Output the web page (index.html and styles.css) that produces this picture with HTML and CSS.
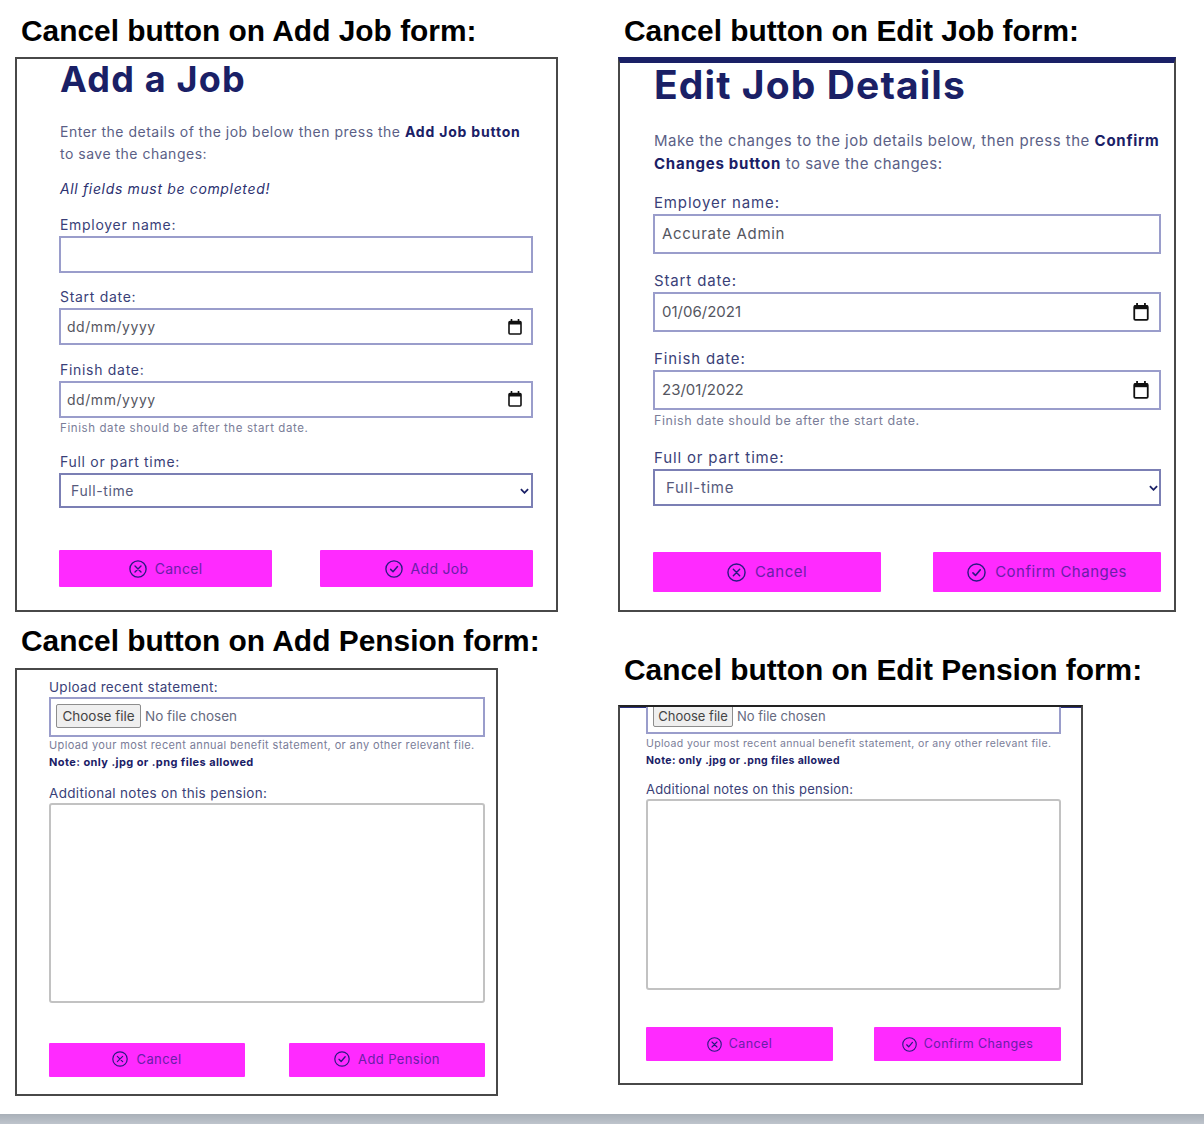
FILE: index.html
```html
<!DOCTYPE html>
<html lang="en">
<head>
<meta charset="utf-8">
<title>Cancel buttons on forms</title>
<link rel="stylesheet" href="styles.css">
</head>
<body>
<svg class="defs" width="0" height="0" aria-hidden="true">
  <symbol id="i-x" viewBox="0 0 24 24"><circle cx="12" cy="12" r="10.8" fill="none" stroke="currentColor" stroke-width="1.8"/><path d="M8 8l8 8M16 8l-8 8" fill="none" stroke="currentColor" stroke-width="1.8" stroke-linecap="round"/></symbol>
  <symbol id="i-c" viewBox="0 0 24 24"><circle cx="12" cy="12" r="10.8" fill="none" stroke="currentColor" stroke-width="1.8"/><path d="M7.5 12.5l3.200 3.200 6-7" fill="none" stroke="currentColor" stroke-width="2" stroke-linecap="round" stroke-linejoin="round"/></symbol>
  <symbol id="i-cal" viewBox="0 0 14 16"><path d="M3.500 0v2M10.500 0v2" stroke="#111" stroke-width="1.600" fill="none"/><rect x="1" y="2.500" width="12" height="12.500" rx="1" fill="none" stroke="#111" stroke-width="1.600"/><rect x="1" y="2" width="12" height="3.500" fill="#111"/></symbol>
  <symbol id="i-chev" viewBox="0 0 10 6"><path d="M1 1l4 4 4-4" fill="none" stroke="#1a2066" stroke-width="2"/></symbol>
</svg>
<main class="sheet">
  <section class="col">
    <h1 class="cap cap-a">Cancel button on Add Job form:</h1>
    <div class="panel add-job">
      <h2 class="title">Add a Job</h2>
      <p class="lead">Enter the details of the job below then press the <b>Add Job button</b> to save the changes:</p>
      <p class="lead req"><i>All fields must be completed!</i></p>
      <div class="field"><label class="lbl">Employer name:</label><div class="box"></div></div>
      <div class="field"><label class="lbl">Start date:</label><div class="box date"><span>dd/mm/yyyy</span><svg class="cal"><use href="#i-cal"/></svg></div></div>
      <div class="field"><label class="lbl">Finish date:</label><div class="box date"><span>dd/mm/yyyy</span><svg class="cal"><use href="#i-cal"/></svg></div><div class="hint">Finish date should be after the start date.</div></div>
      <div class="field"><label class="lbl">Full or part time:</label><div class="box sel"><span>Full-time</span><svg class="chev"><use href="#i-chev"/></svg></div></div>
      <div class="actions">
        <div class="btn"><svg class="ico"><use href="#i-x"/></svg><span>Cancel</span></div>
        <div class="btn"><svg class="ico"><use href="#i-c"/></svg><span>Add Job</span></div>
      </div>
    </div>
    <h1 class="cap cap-c">Cancel button on Add Pension form:</h1>
    <div class="panel add-pen">
      <div class="field"><label class="lbl">Upload recent statement:</label>
        <div class="box file"><span class="choose">Choose file</span><span class="none">No file chosen</span></div>
        <div class="hint">Upload your most recent annual benefit statement, or any other relevant file.</div>
        <div class="note">Note: only .jpg or .png files allowed</div>
      </div>
      <div class="field"><label class="lbl">Additional notes on this pension:</label><div class="area"></div></div>
      <div class="actions">
        <div class="btn"><svg class="ico"><use href="#i-x"/></svg><span>Cancel</span></div>
        <div class="btn"><svg class="ico"><use href="#i-c"/></svg><span>Add Pension</span></div>
      </div>
    </div>
  </section>
  <section class="col">
    <h1 class="cap cap-b">Cancel button on Edit Job form:</h1>
    <div class="panel edit-job">
      <h2 class="title">Edit Job Details</h2>
      <p class="lead">Make the changes to the job details below, then press the <b>Confirm Changes button</b> to save the changes:</p>
      <div class="field"><label class="lbl">Employer name:</label><div class="box"><span>Accurate Admin</span></div></div>
      <div class="field"><label class="lbl">Start date:</label><div class="box date"><span>01/06/2021</span><svg class="cal"><use href="#i-cal"/></svg></div></div>
      <div class="field"><label class="lbl">Finish date:</label><div class="box date"><span>23/01/2022</span><svg class="cal"><use href="#i-cal"/></svg></div><div class="hint">Finish date should be after the start date.</div></div>
      <div class="field"><label class="lbl">Full or part time:</label><div class="box sel"><span>Full-time</span><svg class="chev"><use href="#i-chev"/></svg></div></div>
      <div class="actions">
        <div class="btn"><svg class="ico"><use href="#i-x"/></svg><span>Cancel</span></div>
        <div class="btn"><svg class="ico"><use href="#i-c"/></svg><span>Confirm Changes</span></div>
      </div>
    </div>
    <h1 class="cap cap-d">Cancel button on Edit Pension form:</h1>
    <div class="panel edit-pen">
      <div class="field">
        <div class="box file"><span class="choose">Choose file</span><span class="none">No file chosen</span></div>
        <div class="hint">Upload your most recent annual benefit statement, or any other relevant file.</div>
        <div class="note">Note: only .jpg or .png files allowed</div>
      </div>
      <div class="field"><label class="lbl">Additional notes on this pension:</label><div class="area"></div></div>
      <div class="actions">
        <div class="btn"><svg class="ico"><use href="#i-x"/></svg><span>Cancel</span></div>
        <div class="btn"><svg class="ico"><use href="#i-c"/></svg><span>Confirm Changes</span></div>
      </div>
    </div>
  </section>
</main>
<div class="strip"></div>
</body>
</html>
```
FILE: styles.css
```css
* { box-sizing: border-box; }
html, body { margin: 0; padding: 0; background: #fff; }
body { font-family: Inter, "Liberation Sans", sans-serif; color: #1a2066; }
.defs { position: absolute; }
.sheet { display: grid; grid-template-columns: 603px 586px; padding-left: 15px; height: 1114px; overflow: hidden; }
.col { display: flex; flex-direction: column; align-items: flex-start; }
.cap { margin: 0 0 0 6px; font: 700 29.9px/34px "Liberation Sans", Arial, sans-serif; color: #000; white-space: nowrap; }
.cap-a, .cap-b { margin-top: 14px; margin-bottom: 9px; }
.cap-c { margin-top: 12px; margin-bottom: 10px; }
.cap-d { margin-top: 41px; margin-bottom: 18px; }
.panel { border: 2px solid #484848; background: #fff; display: flex; flex-direction: column; }
.title { margin: 0; font-weight: 700; color: #1a2066; white-space: nowrap; }
.lead { margin: 0; color: #5b5f86; font-weight: 400; }
.lead b { color: #1a2066; font-weight: 700; }
.req { color: #2c3170; }
.lbl { display: block; color: #3a3f78; white-space: nowrap; }
.box { border: 2px solid #9a9dcb; background: #fff; display: flex; align-items: center; color: #55565f; white-space: nowrap; }
.date { justify-content: space-between; }
.sel { justify-content: space-between; color: #565a7c; border-color: #7b7fb4; }
.cal { flex: none; }
.chev { width: 9px; height: 6px; flex: none; }
.hint { color: #7a7d98; white-space: nowrap; }
.note { color: #1a2066; font-weight: 700; white-space: nowrap; }
.area { border: 2px solid #c2c2c2; border-radius: 3px; background: #fff; }
.choose { background: #efefef; border: 1px solid #8d8d8d; border-radius: 2px; color: #444; display: flex; align-items: center; justify-content: center; flex: none; }
.none { color: #666a80; }
.actions { display: flex; justify-content: space-between; }
.btn { background: #ff2aff; border-radius: 1px; display: flex; align-items: center; justify-content: center; color: #6a1fa8; }
.btn span { margin-top: -1px; }
.ico { color: #2a1a80; flex: none; }

/* Add a Job */
.add-job { width: 543px; height: 555px; padding: 2px 23px 0 42px; }
.add-job .title { font-size: 36px; line-height: 38px; letter-spacing: 1.2px; margin-top: -1px; margin-bottom: 1px; padding-left: 1px; }
.add-job .lead { font-size: 14px; line-height: 22px; letter-spacing: .5px; margin-top: 22px; padding-left: 1px; }
.add-job .lead b { letter-spacing: .8px; }
.add-job .req { margin-top: 13px; letter-spacing: .65px; }
.add-job .lbl { font-size: 14px; line-height: 22px; letter-spacing: .7px; padding-left: 1px; }
.add-job .hint { padding-left: 1px; }
.add-job .field { margin-top: 13.5px; }
.add-job .box { height: 37px; font-size: 14px; padding: 0 9px 0 6px; letter-spacing: .55px; }
.add-job .cal { width: 14px; height: 16px; }
.add-job .hint { font-size: 11.5px; line-height: 20px; letter-spacing: .6px; }
.add-job .sel { height: 35px; padding: 0 2px 0 10px; letter-spacing: .6px; }
.add-job .actions { margin-top: 42px; }
.add-job .btn { width: 213px; height: 37px; gap: 8px; font-size: 14px; letter-spacing: .3px; }
.add-job .ico { width: 18px; height: 18px; }

/* Edit Job Details */
.edit-job { width: 558px; height: 555px; padding: 0 13px 0 33px; border-top: 6px solid #1a2066; }
.edit-job .title { font-size: 39px; line-height: 44px; letter-spacing: 1.1px; padding-left: 1px; }
.edit-job .lead { font-size: 15px; line-height: 22.5px; letter-spacing: .5px; margin: 23px -4px 0 1px; }
.edit-job .lead b { letter-spacing: .75px; }
.edit-job .lbl { font-size: 15px; line-height: 23px; letter-spacing: .85px; padding-left: 1px; }
.edit-job .field { margin-top: 16px; }
.edit-job .field + .field { margin-top: 15px; }
.edit-job .box { height: 40px; font-size: 15px; padding: 0 10.5px 0 7px; letter-spacing: .7px; }
.edit-job .box span { margin-top: -1px; }
.edit-job .date { letter-spacing: 0; }
.edit-job .cal { width: 16px; height: 18px; }
.edit-job .hint { font-size: 12.5px; line-height: 21px; letter-spacing: .55px; padding-left: 1px; }
.edit-job .sel { height: 37px; padding: 0 1.500px 0 11px; }
.edit-job .actions { margin-top: 46px; }
.edit-job .btn { width: 228px; height: 40px; gap: 9px; font-size: 15px; letter-spacing: .5px; }
.edit-job .ico { width: 19px; height: 19px; }

/* Add Pension */
.add-pen { width: 483px; height: 428px; padding: 6px 11px 0 32px; }
.add-pen .field + .field { margin-top: 11px; }
.add-pen .lbl { font-size: 13.5px; line-height: 20px; padding-top: 1px; letter-spacing: .32px; }
.add-pen .file { height: 40px; font-size: 13.5px; padding-left: 5px; gap: 4px; }
.add-pen .choose { width: 85px; height: 24px; margin-top: -2px; }
.add-pen .none { margin-top: -2px; }
.add-pen .hint { font-size: 11px; line-height: 17px; letter-spacing: .38px; }
.add-pen .note { font-size: 11px; line-height: 17px; letter-spacing: .42px; }
.add-pen .area { height: 200px; }
.add-pen .actions { margin-top: 40px; }
.add-pen .btn { width: 196px; height: 34px; gap: 8px; font-size: 13px; letter-spacing: .4px; padding-bottom: 2px; }
.add-pen .ico { width: 16px; height: 16px; }

/* Edit Pension */
.edit-pen { width: 465px; height: 380px; padding: 0 20px 0 26px; border-top-color: #222; box-shadow: inset 0 1px 0 #2a3080; }
.edit-pen .lbl { font-size: 13px; line-height: 20px; letter-spacing: .22px; }
.edit-pen .field + .field { margin-top: 10px; }
.edit-pen .file { height: 27px; font-size: 13px; padding-left: 5px; gap: 4px; border-top: 0; overflow: hidden; }
.edit-pen .choose { width: 80px; height: 22px; margin-top: -7px; }
.edit-pen .none { margin-top: -7px; }
.edit-pen .hint { font-size: 10.5px; line-height: 17px; letter-spacing: .35px; margin-top: 1px; }
.edit-pen .note { font-size: 10.5px; line-height: 17px; letter-spacing: .36px; }
.edit-pen .area { height: 191px; }
.edit-pen .actions { margin-top: 37px; }
.edit-pen .btn { width: 187px; height: 34px; gap: 7px; font-size: 12.5px; letter-spacing: .4px; }
.edit-pen .ico { width: 15px; height: 15px; }

.strip { height: 10px; background: linear-gradient(#a9b0b8, #bec4cc); }
```
